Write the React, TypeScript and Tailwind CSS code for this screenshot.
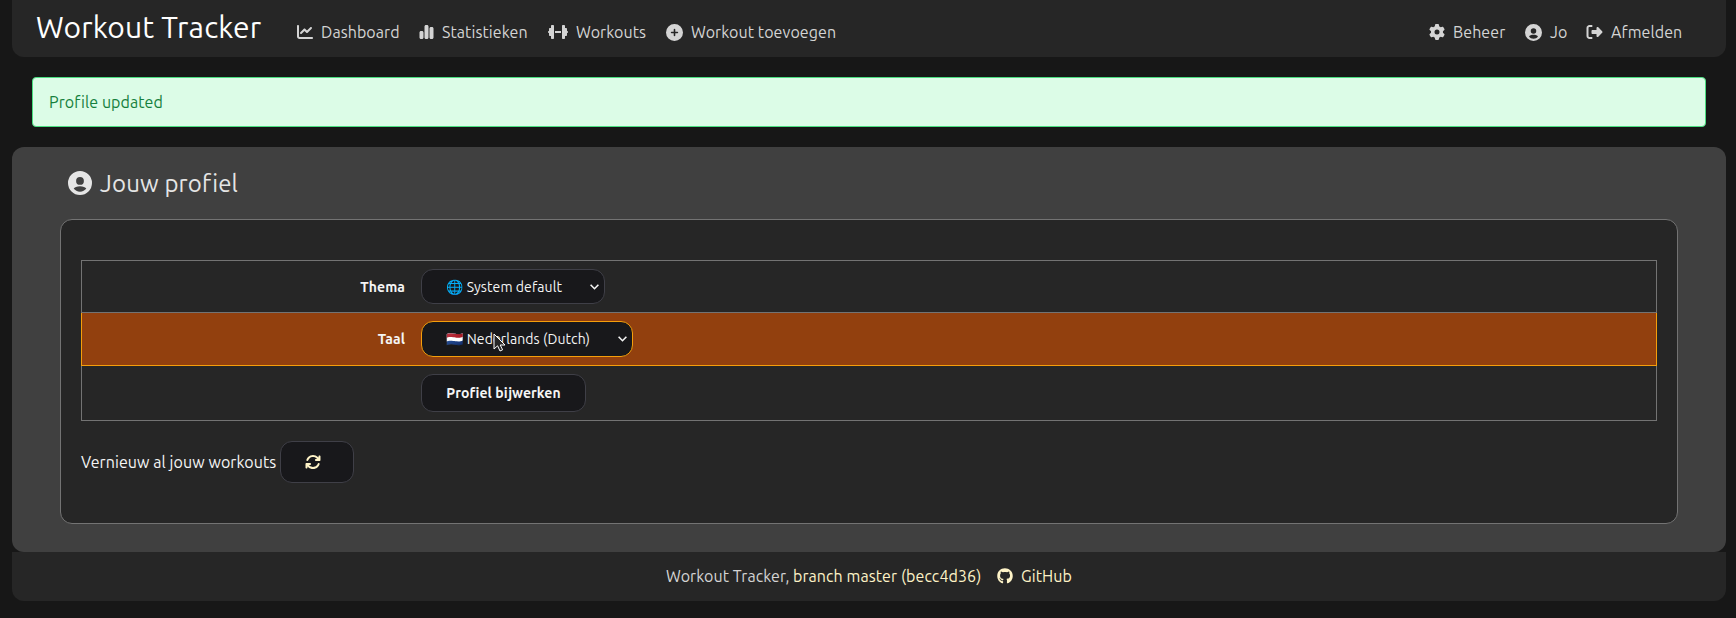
import { FaChartLine, FaChartSimple, FaGear, FaRightFromBracket, FaCirclePlus, FaArrowsRotate, FaGithub, FaDumbbell } from "react-icons/fa6";
import type { ReactNode } from "react";

function NavItem({ icon, label, width }: { icon: ReactNode; label: string; width: string }) {
  return (
    <a className={`flex h-6 items-center whitespace-nowrap ${width}`}>
      <span className="mr-2 flex shrink-0">{icon}</span>
      <span>{label}</span>
    </a>
  );
}

function UserIcon({ className }: { className: string }) {
  return (
    <svg viewBox="0 0 24 24" className={className} fill="currentColor">
      <path
        fillRule="evenodd"
        d="M12 0a12 12 0 1 0 0 24a12 12 0 0 0 0-24zM12 6a3.9 3.9 0 1 1 0 7.8a3.9 3.9 0 0 1 0-7.8zM12 15.2c3 0 5.6 1 6.3 2.3c-1.4 2-3.7 3.2-6.3 3.2s-4.900-1.200-6.300-3.200c.7-1.300 3.300-2.300 6.300-2.300z"
      />
    </svg>
  );
}

function Chevron() {
  return (
    <svg viewBox="0 0 9 6" className="h-1.5 w-[9px] shrink-0" fill="none" stroke="#f5f5f5" strokeWidth="1.6">
      <path d="M.6 .8L4.500 4.700L8.400 .8" />
    </svg>
  );
}

export default function App() {
  return (
    <div className="h-[618px] overflow-hidden bg-[#171717] pl-3 font-['Ubuntu','Noto_Sans','Noto_Color_Emoji',sans-serif] text-base tracking-[0.08px] text-neutral-300">
      <div className="w-[1714px]">
        <nav className="flex h-[57px] rounded-b-xl bg-neutral-800 pt-5 pl-6">
          <h1 className="-mt-[11px] w-[261px] text-[30px] leading-9 tracking-[0.15px] whitespace-nowrap text-white">Workout Tracker</h1>
          <NavItem width="w-[122px]" icon={<FaChartLine />} label="Dashboard" />
          <NavItem width="w-[129px]" icon={<FaChartSimple className="w-[15px]" />} label="Statistieken" />
          <NavItem width="w-[118px]" icon={<FaDumbbell className="w-5" />} label="Workouts" />
          <NavItem width="w-[200px]" icon={<FaCirclePlus className="size-[17px]" />} label="Workout toevoegen" />
          <div className="mr-11 ml-auto flex">
            <NavItem width="w-24" icon={<FaGear />} label="Beheer" />
            <NavItem width="w-[61px]" icon={<UserIcon className="size-[17px]" />} label="Jo" />
            <NavItem width="w-24" icon={<FaRightFromBracket className="w-[17px]" />} label="Afmelden" />
          </div>
        </nav>

        <div className="mx-5 mt-5 flex h-[50px] items-center rounded border border-[#4ade80] bg-[#dcfce7] px-4 text-[#15803d]">
          Profile updated
        </div>

        <main className="mt-5 h-[405px] rounded-xl bg-neutral-700 px-12 pt-[18px]">
          <h2 className="flex h-9 items-center gap-2 pl-2 text-2xl tracking-[0.15px] text-neutral-200">
            <UserIcon className="size-6" />
            <span className="pt-px">Jouw profiel</span>
          </h2>
          <section className="mt-[18px] h-[305px] rounded-xl border border-neutral-500 bg-neutral-800 px-5 pt-10 text-neutral-100">
            <div className="border border-neutral-500 text-sm">
              <div className="flex h-[52px] items-center border-b border-neutral-500">
                <div className="w-[323px] text-right font-bold">Thema</div>
                <div className="ml-4 flex h-[35px] w-[184px] items-center rounded-xl border border-zinc-700 bg-zinc-900 pr-[5px] pl-6">
                  <span className="grow whitespace-nowrap">🌐 System default</span>
                  <Chevron />
                </div>
              </div>
              <div className="-mx-px flex h-[53px] items-center border-x border-b border-[#f59e0b] bg-[#92400e]">
                <div className="w-[323px] text-right font-bold">Taal</div>
                <div className="relative ml-4 flex h-9 w-[212px] items-center rounded-xl border border-[#f59e0b] bg-zinc-900 pr-[5px] pl-6">
                  <span className="grow whitespace-nowrap">🇳🇱 Nederlands (Dutch)</span>
                  <Chevron />
                  <svg viewBox="0 0 13 19" className="absolute top-[11px] left-[71px] h-[19px] w-[13px]">
                    <path d="M1 1v15l3.600-3.200L7 18l2.600-1.200L7.200 12H12z" fill="#262626" stroke="#fff" />
                  </svg>
                </div>
              </div>
              <div className="flex h-[54px] items-center">
                <button className="ml-[339px] h-[38px] w-[165px] rounded-xl border border-zinc-700 bg-zinc-900 font-bold whitespace-nowrap">
                  Profiel bijwerken
                </button>
              </div>
            </div>
            <div className="mt-5 flex items-center">
              <span className="w-[199px] whitespace-nowrap">Vernieuw al jouw workouts</span>
              <button className="flex h-[42px] w-[74px] items-center rounded-xl border border-zinc-700 bg-zinc-900 pl-6 text-[#fef3c7]">
                <FaArrowsRotate />
              </button>
            </div>
          </section>
        </main>

        <footer className="flex h-[49px] items-center rounded-b-xl bg-neutral-800 pb-0.5 pl-[654px] whitespace-nowrap">
          <span className="w-[127px]">Workout Tracker,</span>
          <span className="w-[204px] text-[#fef3c7]">branch master (becc4d36)</span>
          <FaGithub className="mr-2 text-[#fef3c7]" />
          <span className="text-[#fef3c7]">GitHub</span>
        </footer>
      </div>
    </div>
  );
}
